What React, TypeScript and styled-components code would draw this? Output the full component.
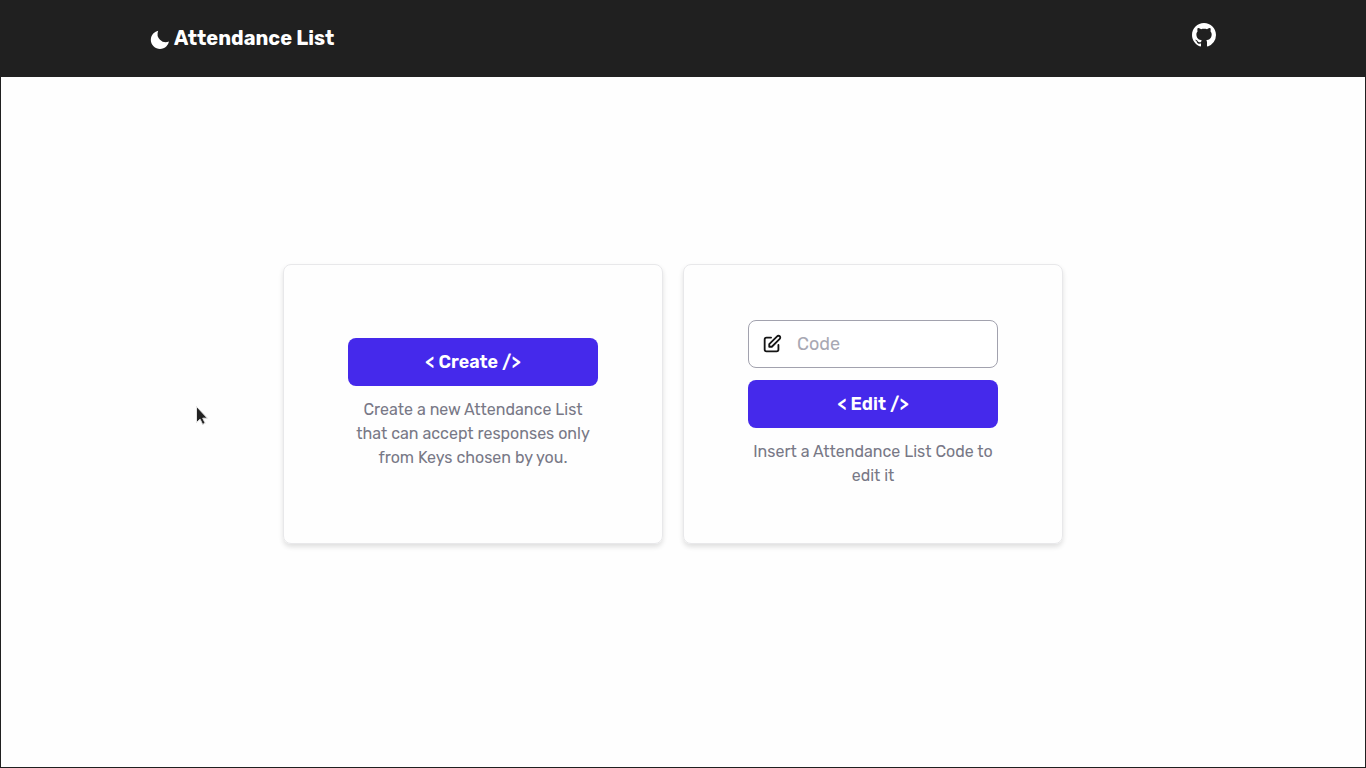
import React from 'react';
import styled, { createGlobalStyle } from 'styled-components';

const GlobalStyle = createGlobalStyle`
  * {
    box-sizing: border-box;
  }

  body {
    margin: 0;
    background: #fefefe;
    font-family: Rubik, Roboto, 'Liberation Sans', sans-serif;
    font-size: 16px;
  }

  button,
  input {
    font: inherit;
  }
`;

const Page = styled.div`
  display: flex;
  flex-direction: column;
  min-height: 100vh;
  border: 1px solid #202020;
`;

const Header = styled.header`
  display: flex;
  justify-content: center;
  padding: 0 24px;
  background: #202020;
`;

const HeaderContent = styled.div`
  display: flex;
  flex: 1;
  align-items: center;
  justify-content: space-between;
  max-width: 1068px;
  height: 76px;
`;

const Brand = styled.a`
  display: flex;
  align-items: center;
  gap: 3px;
  padding-bottom: 2px;
  color: #ffffff;
  font-size: 20px;
  font-weight: 700;
  line-height: 24px;
  text-decoration: none;

  svg {
    margin-top: 4px;
  }
`;

const GithubLink = styled.a`
  display: flex;
  padding: 0 1px 8px 0;
  color: #ffffff;
`;

const Main = styled.main`
  display: flex;
  flex: 1;
  flex-wrap: wrap;
  align-items: center;
  justify-content: center;
  gap: 20px;
  padding: 0 20px 36px 0;
`;

const Card = styled.section`
  display: flex;
  flex-direction: column;
  align-items: center;
  justify-content: center;
  gap: 12px;
  width: 380px;
  min-height: 280px;
  padding: 20px 64px;
  border: 1px solid #e8e8ea;
  border-radius: 8px;
  box-shadow: 0 3px 5px rgba(0, 0, 0, 0.12);
`;

const Field = styled.label`
  display: flex;
  align-items: center;
  gap: 14px;
  width: 100%;
  height: 48px;
  padding: 0 12px;
  border: 1px solid #a2a2ae;
  border-radius: 8px;
  background: #ffffff;
  color: #151515;

  svg {
    flex: none;
  }
`;

const TextInput = styled.input`
  flex: 1;
  min-width: 0;
  padding: 0;
  border: 0;
  outline: 0;
  background: transparent;
  color: #29292e;
  font-size: 18px;

  &::placeholder {
    color: #a8a8b3;
    opacity: 1;
  }
`;

const Button = styled.button`
  width: 100%;
  height: 48px;
  padding: 0;
  border: 0;
  border-radius: 8px;
  background: #4529eb;
  color: #ffffff;
  font-size: 18px;
  font-weight: 600;
  cursor: pointer;
`;

const Description = styled.p`
  margin: 0;
  color: #787886;
  font-size: 16px;
  line-height: 24px;
  text-align: center;
`;

const Pointer = styled.svg`
  position: absolute;
  top: 405px;
  left: 195px;
`;

function MoonIcon() {
  return (
    <svg width="22" height="22" viewBox="0 0 24 24" fill="currentColor" aria-hidden>
      <path d="M12 11.807A9.002 9.002 0 0 1 10.049 2a9.942 9.942 0 0 0-5.12 2.735c-3.905 3.905-3.905 10.237 0 14.142 3.906 3.906 10.237 3.905 14.143 0a9.946 9.946 0 0 0 2.735-5.119A9.003 9.003 0 0 1 12 11.807z" />
    </svg>
  );
}

function PencilIcon() {
  return (
    <svg
      width="22"
      height="22"
      viewBox="0 0 24 24"
      fill="none"
      stroke="currentColor"
      strokeWidth="2"
      strokeLinecap="round"
      strokeLinejoin="round"
      aria-hidden
    >
      <path d="M11 5H6a2 2 0 00-2 2v11a2 2 0 002 2h11a2 2 0 002-2v-5m-1.414-9.414a2 2 0 112.828 2.828L11.828 15H9v-2.828l8.586-8.586z" />
    </svg>
  );
}

function GithubMark() {
  return (
    <svg width="24" height="24" viewBox="0 0 16 16" fill="currentColor" aria-hidden>
      <path
        fillRule="evenodd"
        d="M8 0C3.58 0 0 3.58 0 8c0 3.54 2.29 6.53 5.47 7.59.4.07.55-.17.55-.38 0-.19-.01-.82-.01-1.49-2.01.37-2.53-.49-2.69-.94-.09-.23-.48-.94-.82-1.13-.28-.15-.68-.52-.01-.53.63-.01 1.08.58 1.23.82.72 1.21 1.87.87 2.33.66.07-.52.28-.87.51-1.07-1.78-.2-3.64-.89-3.64-3.95 0-.87.31-1.59.82-2.15-.08-.2-.36-1.02.08-2.12 0 0 .67-.21 2.2.82.64-.18 1.32-.27 2-.27.68 0 1.36.09 2 .27 1.53-1.04 2.2-.82 2.2-.82.44 1.1.16 1.92.08 2.12.51.56.82 1.27.82 2.15 0 3.07-1.87 3.75-3.65 3.95.29.25.54.73.54 1.48 0 1.07-.01 1.93-.01 2.2 0 .21.15.46.55.38A8.013 8.013 0 0 0 16 8c0-4.42-3.58-8-8-8z"
      />
    </svg>
  );
}

export default function App() {
  return (
    <Page>
      <GlobalStyle />
      <Header>
        <HeaderContent>
          <Brand href="#">
            <MoonIcon />
            Attendance List
          </Brand>
          <GithubLink href="#" aria-label="GitHub">
            <GithubMark />
          </GithubLink>
        </HeaderContent>
      </Header>
      <Main>
        <Card>
          <Button type="button">&lt; Create /&gt;</Button>
          <Description>
            Create a new Attendance List that can accept responses only from Keys chosen by you.
          </Description>
        </Card>
        <Card>
          <Field>
            <PencilIcon />
            <TextInput type="text" placeholder="Code" aria-label="Code" />
          </Field>
          <Button type="button">&lt; Edit /&gt;</Button>
          <Description>Insert a Attendance List Code to edit it</Description>
        </Card>
      </Main>
      <Pointer width="14" height="21" viewBox="0 0 14 21" aria-hidden>
        <path
          d="M1.5 1.5v16l3.6-3.3 2.5 5.2 2.6-1.2-2.5-5h4.7z"
          fill="#222222"
          stroke="#e4e4e4"
          strokeWidth="1"
        />
      </Pointer>
    </Page>
  );
}
